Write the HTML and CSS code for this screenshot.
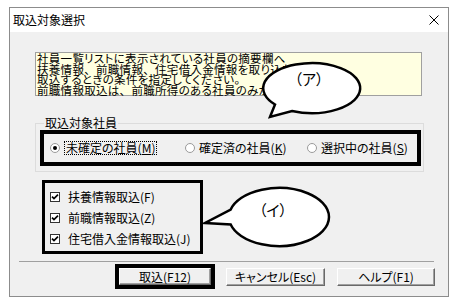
FILE: index.html
```html
<!DOCTYPE html>
<html lang="ja">
<head>
<meta charset="utf-8">
<title>取込対象選択</title>
<link rel="stylesheet" href="styles.css">
</head>
<body>
<div class="screen">
  <div class="window">
    <div class="titlebar">
      <span class="title">取込対象選択</span>
      <svg class="close" viewBox="0 0 10 10"><path d="M0.5 0.5L9.5 9.5M9.5 0.5L0.5 9.5" stroke="#000" stroke-width="1" fill="none"/></svg>
    </div>
    <div class="content">
      <div class="info">社員一覧リストに表示されている社員の摘要欄へ<br>扶養情報<span class="fw">、</span>前職情報<span class="fw">、</span>住宅借入金情報を取り込む<br>取込するときの条件を指定してください。<br>前職情報取込は<span class="fw">、</span>前職所得のある社員のみが対象です。</div>
      <fieldset class="group">
        <legend>取込対象社員</legend>
        <div class="radiobox">
          <div class="opt"><span class="radio on"></span><span class="lbl focus">未確定の社員(<u>M</u>)</span></div>
          <div class="opt"><span class="radio"></span><span class="lbl">確定済の社員(<u>K</u>)</span></div>
          <div class="opt"><span class="radio"></span><span class="lbl">選択中の社員(<u>S</u>)</span></div>
        </div>
      </fieldset>
      <div class="checkgroup">
        <div class="chkrow"><svg class="chk" viewBox="0 0 10 10"><rect x="0.5" y="0.5" width="9" height="9" fill="#fff" stroke="#333"/><path d="M2 4.6L4 6.6L8 2.6" fill="none" stroke="#000" stroke-width="1.7"/></svg><span>扶養情報取込(F)</span></div>
        <div class="chkrow"><svg class="chk" viewBox="0 0 10 10"><rect x="0.5" y="0.5" width="9" height="9" fill="#fff" stroke="#333"/><path d="M2 4.6L4 6.6L8 2.6" fill="none" stroke="#000" stroke-width="1.7"/></svg><span>前職情報取込(Z)</span></div>
        <div class="chkrow"><svg class="chk" viewBox="0 0 10 10"><rect x="0.5" y="0.5" width="9" height="9" fill="#fff" stroke="#333"/><path d="M2 4.6L4 6.6L8 2.6" fill="none" stroke="#000" stroke-width="1.7"/></svg><span>住宅借入金情報取込(J)</span></div>
      </div>
      <div class="sep"></div>
      <div class="buttons">
        <div class="btnframe"><button class="btn">取込(F12)</button></div>
        <button class="btn cancel">キャンセル(Esc)</button>
        <button class="btn help">ヘルプ(F1)</button>
      </div>
    </div>
  </div>
  <svg class="callouts" width="462" height="306" viewBox="0 0 462 306">
    <path d="M275 104.5 A48.5 25 0 1 1 292 111 L270 117 Z" fill="#fff" stroke="#000" stroke-width="2.5" stroke-linejoin="miter"/>
    <text x="309" y="85" text-anchor="middle" class="ctext">（ア）</text>
    <path d="M230.7 209.5 A50 29 0 1 1 230.7 224.5 L205 223 Z" fill="#fff" stroke="#000" stroke-width="2.5"/>
    <text x="273" y="216" text-anchor="middle" class="ctext">（イ）</text>
  </svg>
</div>
</body>
</html>
```
FILE: styles.css
```css
html, body {
  margin: 0;
  background: #fff;
}
body {
  font-family: "Noto Sans CJK JP", "Noto Sans", sans-serif;
  font-size: 12px;
  color: #000;
  font-feature-settings: "palt";
}
.screen {
  position: relative;
  width: 462px;
  height: 306px;
  padding: 7px 0 0 9px;
  box-sizing: border-box;
}
.window {
  width: 440px;
  height: 290px;
  border: 1px solid #8c8c8c;
  box-sizing: border-box;
  display: flex;
  flex-direction: column;
}
.titlebar {
  height: 24px;
  flex: none;
  background: #fff;
  display: flex;
  align-items: center;
  padding-left: 3px;
}
.title {
  flex: 1;
  font-size: 12px;
  line-height: 14px;
}
.close {
  width: 10px;
  height: 10px;
  margin-right: 9px;
}
.content {
  flex: 1;
  background: #f0f0f0;
  padding-top: 20px;
}
.info {
  margin-left: 25px;
  width: 387px;
  height: 44px;
  box-sizing: border-box;
  border: 1px solid #a0a0a0;
  background: #ffffe1;
  padding: 0 0 0 1px;
  font-size: 11.5px;
  letter-spacing: 0.3px;
  line-height: 10.6px;
  white-space: nowrap;
}
.fw {
  font-feature-settings: normal;
}
.group {
  margin: 21px 0 0 25px;
  width: 389px;
  box-sizing: border-box;
  border: 1px solid #dcdcdc;
  padding: 0;
  min-width: 0;
}
.group legend {
  margin-left: 8px;
  padding: 0 1px;
  line-height: 12px;
}
.radiobox {
  margin: 1px 0 5px 4px;
  width: 381px;
  height: 36px;
  box-sizing: border-box;
  border: 4px solid #000;
  padding-left: 6px;
  display: grid;
  grid-template-columns: 135px 122px auto;
  align-items: center;
}
.opt {
  display: flex;
  align-items: center;
  line-height: 12px;
}
.radio {
  position: relative;
  flex: none;
  width: 10px;
  height: 10px;
  box-sizing: border-box;
  border-radius: 50%;
  background: #fff;
  border: 1px solid #9a9a9a;
  margin-right: 4px;
}
.radio.on::after {
  content: "";
  position: absolute;
  left: 2px;
  top: 2px;
  width: 4px;
  height: 4px;
  border-radius: 50%;
  background: #000;
}
.lbl.focus {
  border: 1px dotted #000;
  padding: 0 1px;
}
.checkgroup {
  margin: 8px 0 0 32px;
  width: 161px;
  height: 74px;
  box-sizing: border-box;
  border: 3px solid #000;
  padding: 3px 0 0 5px;
}
.chkrow {
  height: 21px;
  display: flex;
  align-items: center;
  line-height: 12px;
}
.chk {
  flex: none;
  width: 10px;
  height: 10px;
  margin-right: 8px;
}
.sep {
  margin: 7px 0 0 9px;
  width: 415px;
  height: 1px;
  background: #a0a0a0;
}
.buttons {
  display: flex;
  align-items: center;
  margin: 2px 0 0 105px;
}
.btnframe {
  width: 100px;
  height: 25px;
  box-sizing: border-box;
  border: 4px solid #000;
  display: flex;
}
.btn {
  box-sizing: border-box;
  height: 18px;
  padding: 0;
  margin: 0;
  font: inherit;
  font-size: 12px;
  line-height: 14px;
  color: #000;
  background: #f0f0f0;
  border-style: solid;
  border-width: 1px;
  border-color: #fff #696969 #696969 #fff;
  box-shadow: inset -1px -1px 0 #a0a0a0;
  display: flex;
  align-items: center;
  justify-content: center;
}
.btnframe .btn {
  width: 100%;
  height: 100%;
}
.cancel {
  margin-left: 11px;
  width: 99px;
}
.help {
  margin-left: 12px;
  width: 98px;
}
.callouts {
  position: absolute;
  left: 0;
  top: 0;
  pointer-events: none;
}
.ctext {
  font-family: "Noto Sans CJK JP", sans-serif;
  font-size: 15px;
  fill: #000;
}
```
